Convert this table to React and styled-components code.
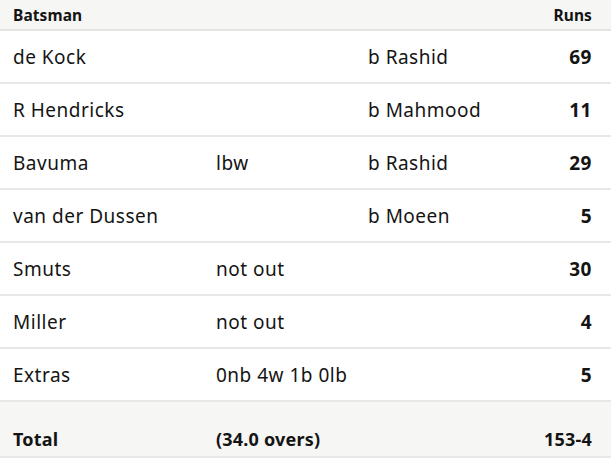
import React from 'react';
import styled, { createGlobalStyle } from 'styled-components';

const GlobalStyle = createGlobalStyle`
  body {
    margin: 0;
    background: #fff;
    font-family: "Noto Sans", "Open Sans", sans-serif;
    color: #141414;
  }
`;

const Table = styled.table`
  width: 611px;
  border-collapse: collapse;
  table-layout: fixed;
`;

const HeadRow = styled.tr`
  background: #f6f6f4;
  border-bottom: 2px solid #e4e4e4;
`;

const HeadCell = styled.th`
  height: 29px;
  padding: 0 ${({ last }) => (last ? '19px' : '6px')} 0 ${({ first }) => (first ? '13px' : '6px')};
  font-size: 15.5px;
  font-weight: 700;
  letter-spacing: 0.1px;
  text-align: ${({ right }) => (right ? 'right' : 'left')};
`;

const Row = styled.tr`
  background: ${({ total }) => (total ? '#f6f6f4' : '#fff')};
  border-bottom: 2px solid #e8e8e8;
`;

const Cell = styled.td`
  height: ${({ total }) => (total ? '56px' : '53px')};
  padding: ${({ total }) => (total ? '20px' : '0')} ${({ last }) => (last ? '19px' : '6px')} 0 ${({ first }) => (first ? '13px' : '6px')};
  box-sizing: border-box;
  font-size: ${({ total }) => (total ? '18px' : '19px')};
  letter-spacing: ${({ total }) => (total ? '0.2px' : '0.5px')};
  font-weight: ${({ bold }) => (bold ? 700 : 400)};
  text-align: ${({ right }) => (right ? 'right' : 'left')};
  white-space: nowrap;
`;

const batsmen = [
  { name: 'de Kock', how: '', bowler: 'b Rashid', runs: '69' },
  { name: 'R Hendricks', how: '', bowler: 'b Mahmood', runs: '11' },
  { name: 'Bavuma', how: 'lbw', bowler: 'b Rashid', runs: '29' },
  { name: 'van der Dussen', how: '', bowler: 'b Moeen', runs: '5' },
  { name: 'Smuts', how: 'not out', bowler: '', runs: '30' },
  { name: 'Miller', how: 'not out', bowler: '', runs: '4' },
  { name: 'Extras', how: '0nb 4w 1b 0lb', bowler: '', runs: '5' },
];

const App = () => (
  <>
    <GlobalStyle />
    <Table>
      <colgroup>
        <col style={{ width: 210 }} />
        <col style={{ width: 152 }} />
        <col style={{ width: 160 }} />
        <col />
      </colgroup>
      <thead>
        <HeadRow>
          <HeadCell first>Batsman</HeadCell>
          <HeadCell />
          <HeadCell />
          <HeadCell right last>Runs</HeadCell>
        </HeadRow>
      </thead>
      <tbody>
        {batsmen.map((b) => (
          <Row key={b.name}>
            <Cell first>{b.name}</Cell>
            <Cell>{b.how}</Cell>
            <Cell>{b.bowler}</Cell>
            <Cell right last bold>{b.runs}</Cell>
          </Row>
        ))}
        <Row total>
          <Cell first total bold>Total</Cell>
          <Cell total bold>(34.0 overs)</Cell>
          <Cell total />
          <Cell right last total bold>153-4</Cell>
        </Row>
      </tbody>
    </Table>
  </>
);

export default App;
